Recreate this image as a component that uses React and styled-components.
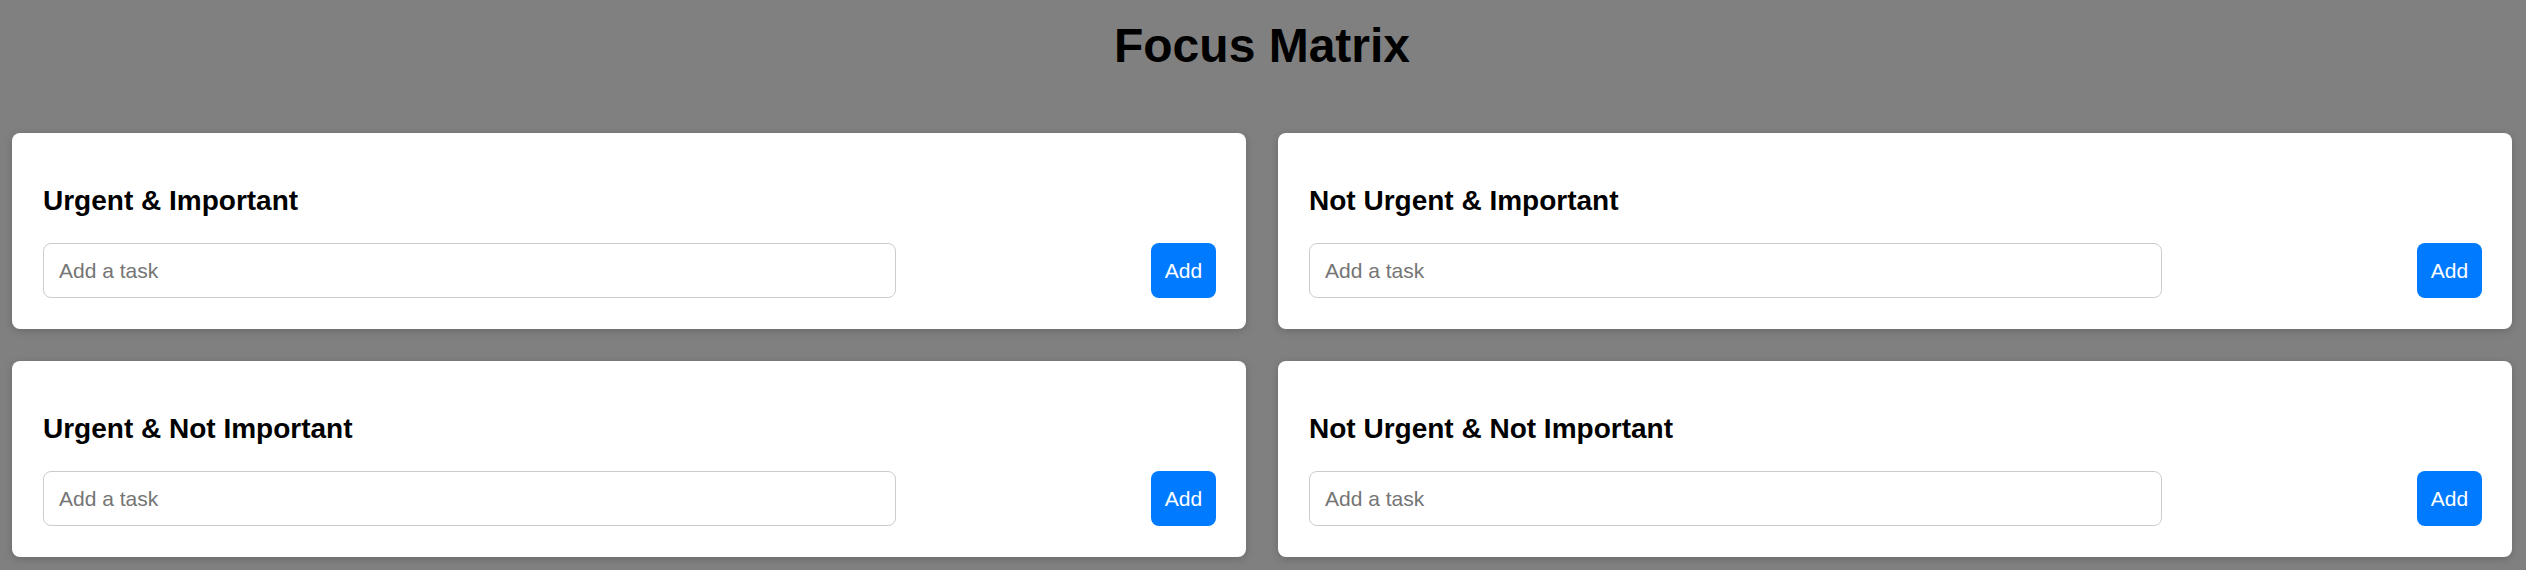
import React from 'react';
import styled, { createGlobalStyle } from 'styled-components';

const GlobalStyle = createGlobalStyle`
  html, body {
    margin: 0;
    padding: 0;
    background: #808080;
    font-family: "Liberation Sans", Arial, sans-serif;
  }
`;

const quadrants = [
  'Urgent & Important',
  'Not Urgent & Important',
  'Urgent & Not Important',
  'Not Urgent & Not Important',
];

const Page = () => {
  return (
    <Wrapper>
      <GlobalStyle />
      <Heading>Focus Matrix</Heading>
      <Matrix>
        {quadrants.map((title) => (
          <Quadrant key={title}>
            <QuadrantTitle>{title}</QuadrantTitle>
            <TaskForm onSubmit={(e) => e.preventDefault()}>
              <TaskInput type="text" placeholder="Add a task" />
              <AddButton type="submit">Add</AddButton>
            </TaskForm>
          </Quadrant>
        ))}
      </Matrix>
    </Wrapper>
  );
};

const Wrapper = styled.div`
  min-height: 570px;
  box-sizing: border-box;
  padding: 0 14px 13px 12px;
`;

const Heading = styled.h1`
  margin: 18px 0 60px;
  text-align: center;
  font-size: 48px;
  font-weight: bold;
  color: #000;
`;

const Matrix = styled.div`
  display: grid;
  grid-template-columns: 1fr 1fr;
  column-gap: 32px;
  row-gap: 32px;
`;

const Quadrant = styled.section`
  background: #fff;
  border-radius: 8px;
  box-shadow: 0 2px 8px rgba(0, 0, 0, 0.18);
  padding: 52px 30px 31px 31px;
`;

const QuadrantTitle = styled.h3`
  margin: 0 0 26px;
  font-size: 28px;
  line-height: 32px;
  font-weight: bold;
  color: #000;
`;

const TaskForm = styled.form`
  display: flex;
  justify-content: space-between;
  align-items: stretch;
`;

const TaskInput = styled.input`
  width: 70%;
  box-sizing: content-box;
  padding: 15px;
  font-size: 21px;
  line-height: 23px;
  font-family: "Liberation Sans", Arial, sans-serif;
  border: 1px solid #ccc;
  border-radius: 8px;
  outline: none;

  &::placeholder {
    color: #757575;
  }
`;

const AddButton = styled.button`
  width: 65px;
  padding: 0;
  border: none;
  border-radius: 8px;
  background: #007bff;
  color: #fff;
  font-size: 21px;
  font-family: "Liberation Sans", Arial, sans-serif;
  cursor: pointer;
`;

export default Page;
